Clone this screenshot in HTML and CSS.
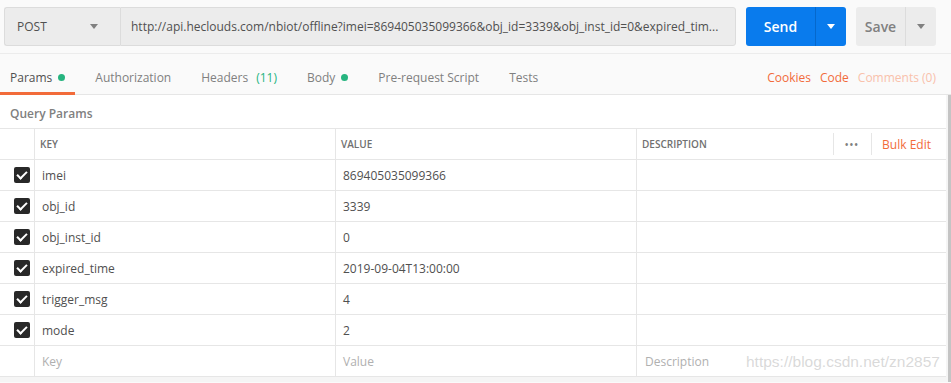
FILE: index.html
```html
<!DOCTYPE html>
<html lang="en">
<head>
  <meta charset="UTF-8">
  <title>Request Builder</title>
  <link rel="stylesheet" href="styles.css">
</head>
<body>
  <div id="request-bar">
    <div class="method-select">
      <span>POST</span>
      <span class="caret caret-gray"></span>
    </div>
    <div class="url-input">http://api.heclouds.com/nbiot/offline?imei=869405035099366&amp;obj_id=3339&amp;obj_inst_id=0&amp;expired_tim...</div>
    <div class="split-button send-button">
      <span class="split-main">Send</span>
      <span class="split-arrow"><span class="caret caret-white"></span></span>
    </div>
    <div class="split-button save-button">
      <span class="split-main">Save</span>
      <span class="split-arrow"><span class="caret caret-gray"></span></span>
    </div>
  </div>

  <div id="tabs">
    <div class="tab-list">
      <div class="tab active">Params <span class="dot"></span></div>
      <div class="tab">Authorization</div>
      <div class="tab">Headers <span class="count">(11)</span></div>
      <div class="tab">Body <span class="dot"></span></div>
      <div class="tab">Pre-request Script</div>
      <div class="tab">Tests</div>
    </div>
    <div class="tab-links">
      <span class="link">Cookies</span>
      <span class="link">Code</span>
      <span class="link faded">Comments (0)</span>
    </div>
  </div>

  <div id="params-pane">
    <div class="params-content">
      <div class="section-title">Query Params</div>
      <div class="params-table">
        <div class="row head">
          <div class="cell check"></div>
          <div class="cell">KEY</div>
          <div class="cell">VALUE</div>
          <div class="cell desc-head">
            <span>DESCRIPTION</span>
            <span class="head-actions">
              <span class="more">•••</span>
              <span class="bulk">Bulk Edit</span>
            </span>
          </div>
        </div>
        <div class="row">
          <div class="cell check"><span class="checkbox"></span></div>
          <div class="cell">imei</div>
          <div class="cell">869405035099366</div>
          <div class="cell"></div>
        </div>
        <div class="row">
          <div class="cell check"><span class="checkbox"></span></div>
          <div class="cell">obj_id</div>
          <div class="cell">3339</div>
          <div class="cell"></div>
        </div>
        <div class="row">
          <div class="cell check"><span class="checkbox"></span></div>
          <div class="cell">obj_inst_id</div>
          <div class="cell">0</div>
          <div class="cell"></div>
        </div>
        <div class="row">
          <div class="cell check"><span class="checkbox"></span></div>
          <div class="cell">expired_time</div>
          <div class="cell">2019-09-04T13:00:00</div>
          <div class="cell"></div>
        </div>
        <div class="row">
          <div class="cell check"><span class="checkbox"></span></div>
          <div class="cell">trigger_msg</div>
          <div class="cell">4</div>
          <div class="cell"></div>
        </div>
        <div class="row">
          <div class="cell check"><span class="checkbox"></span></div>
          <div class="cell">mode</div>
          <div class="cell">2</div>
          <div class="cell"></div>
        </div>
        <div class="row placeholder">
          <div class="cell check"></div>
          <div class="cell">Key</div>
          <div class="cell">Value</div>
          <div class="cell">Description</div>
        </div>
      </div>
      <div class="watermark">https://blog.csdn.net/zn2857</div>
    </div>
    <div class="scrollbar"></div>
  </div>
</body>
</html>
```

FILE: styles.css
```css
html, body {
  margin: 0;
  padding: 0;
  width: 951px;
  height: 383px;
  overflow: hidden;
  background: #fafafa;
  font-family: "Open Sans", "Liberation Sans", sans-serif;
  font-size: 12px;
  color: #505050;
}
#request-bar {
  display: flex;
  align-items: center;
  height: 54px;
  padding: 0 15px 0 4px;
  box-sizing: border-box;
  border-bottom: 1px solid #ececec;
}
.method-select {
  width: 116px;
  height: 39px;
  box-sizing: border-box;
  display: flex;
  align-items: center;
  justify-content: space-between;
  padding: 0 22px 0 12px;
  background: #ececec;
  border: 1px solid #dcdcdc;
  border-right: none;
  border-radius: 3px 0 0 3px;
  font-size: 12px;
  color: #505050;
}
.url-input {
  width: 616px;
  height: 39px;
  box-sizing: border-box;
  padding: 0 10px;
  line-height: 37px;
  background: #ececec;
  border: 1px solid #dcdcdc;
  border-radius: 0 3px 3px 0;
  white-space: nowrap;
  overflow: hidden;
  font-size: 12px;
  color: #505050;
}
.split-button {
  display: flex;
  height: 39px;
  border-radius: 3px;
  overflow: hidden;
  margin-left: 10px;
}
.split-main {
  display: flex;
  align-items: center;
  justify-content: center;
  font-size: 14px;
  font-weight: 600;
}
.split-arrow {
  display: flex;
  align-items: center;
  justify-content: center;
}
.send-button {
  width: 100px;
  background: #097bed;
  color: #fff;
}
.send-button .split-main {
  width: 69px;
  border-right: 1px solid #0568cc;
}
.send-button .split-arrow {
  flex: 1;
}
.save-button {
  width: 80px;
  background: #ececec;
  color: #808080;
}
.save-button .split-main {
  width: 49px;
  border-right: 1px solid #dcdcdc;
}
.save-button .split-arrow {
  flex: 1;
}
.caret {
  width: 0;
  height: 0;
  border-left: 4px solid transparent;
  border-right: 4px solid transparent;
  border-top: 5px solid #808080;
}
.caret-white {
  border-top-color: #fff;
}
#tabs {
  display: flex;
  justify-content: space-between;
  height: 40px;
  padding-right: 15px;
  border-bottom: 1px solid #e6e6e6;
}
.tab-list {
  display: flex;
  gap: 10px;
}
.tab {
  display: flex;
  align-items: center;
  padding: 8px 10px 0;
  font-size: 12px;
  color: #808080;
  border-bottom: 3px solid transparent;
  margin-bottom: -1px;
}
.tab.active {
  color: #505050;
  border-bottom-color: #f26b3a;
}
.dot {
  display: inline-block;
  width: 7px;
  height: 7px;
  border-radius: 50%;
  background: #26b47f;
  margin-left: 6px;
}
.count {
  color: #26b47f;
  margin-left: 8px;
}
.tab-links {
  display: flex;
  align-items: center;
  gap: 9px;
  padding-top: 6px;
}
.link {
  color: #f26b3a;
  font-size: 12px;
}
.link.faded {
  color: #f9c1ab;
}
#params-pane {
  display: flex;
  height: 287px;
  background: #f5f5f5;
}
.params-content {
  position: relative;
  width: 946px;
}
.section-title {
  height: 33px;
  box-sizing: border-box;
  padding: 4px 0 0 10px;
  line-height: 29px;
  background: #fff;
  color: #808080;
  font-size: 12px;
  font-weight: 600;
}
.params-table {
  background: #fff;
  border-top: 1px solid #e6e6e6;
}
.row {
  display: grid;
  grid-template-columns: 34px 301px 301px 1fr;
  height: 31px;
  border-bottom: 1px solid #e6e6e6;
  box-sizing: border-box;
}
.cell {
  display: flex;
  align-items: center;
  padding-left: 7px;
  border-left: 1px solid #e6e6e6;
  color: #505050;
  white-space: nowrap;
}
.cell.check {
  border-left: none;
  padding-left: 14px;
}
.head .cell {
  font-size: 10px;
  font-weight: 600;
  color: #707070;
  padding-left: 5px;
}
.desc-head {
  justify-content: space-between;
}
.head-actions {
  display: flex;
  align-items: center;
  height: 22px;
}
.more {
  font-size: 10px;
  letter-spacing: 1px;
  color: #808080;
  padding: 0 12px 0 11px;
  height: 100%;
  line-height: 22px;
  border-left: 1px solid #e6e6e6;
  border-right: 1px solid #e6e6e6;
}
.bulk {
  color: #f26b3a;
  font-size: 12px;
  font-weight: 400;
  padding: 0 15px 0 10px;
}
.checkbox {
  position: relative;
  display: inline-block;
  width: 16px;
  height: 16px;
  border-radius: 2px;
  background: #282828;
}
.checkbox:after {
  content: "";
  position: absolute;
  left: 5px;
  top: 2px;
  width: 4px;
  height: 8px;
  border-right: 2px solid #fff;
  border-bottom: 2px solid #fff;
  transform: rotate(45deg);
}
.placeholder .cell {
  color: #b0b0b0;
}
.placeholder .cell:last-child {
  padding-left: 8px;
}
.watermark {
  position: absolute;
  left: 746px;
  top: 258px;
  font-family: "Liberation Sans", Arial, sans-serif;
  font-size: 15.5px;
  color: rgba(180, 180, 180, 0.5);
}
.scrollbar {
  width: 3px;
  margin-left: 2px;
  background: #c4c4c4;
}
```
